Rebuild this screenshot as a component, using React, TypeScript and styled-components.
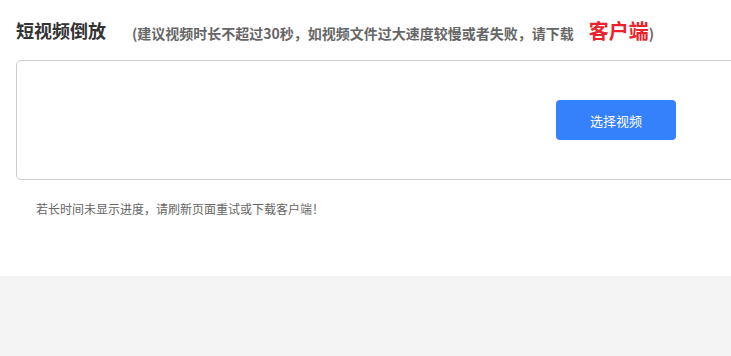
import styled, { createGlobalStyle } from "styled-components";

const GlobalStyle = createGlobalStyle`
    html, body {
        margin: 0;
        padding: 0;
        background: #f4f4f4;
        overflow: hidden;
        font-family: "Noto Sans CJK SC", "Noto Sans", sans-serif;
    }
`;

const PageDiv = styled.div`
    background: #ffffff;
    height: 276px;
    padding: 0 0 0 16px;
    box-sizing: border-box;
`;

const HeaderDiv = styled.div`
    display: flex;
    align-items: center;
    height: 60px;
    white-space: nowrap;
`;

const TitleH = styled.h1`
    margin: 0;
    font-size: 18px;
    font-weight: 700;
    color: #333333;
`;

const TipSpan = styled.span`
    margin-left: 26px;
    font-size: 14px;
    font-weight: 700;
    color: #666666;
`;

const ClientA = styled.a`
    margin-left: 15px;
    font-size: 20px;
    font-weight: 700;
    color: #e8232b;
    text-decoration: none;
`;

const UploadBox = styled.div`
    width: 1200px;
    height: 120px;
    box-sizing: border-box;
    border: 1px solid #cccccc;
    border-radius: 5px;
    display: flex;
    align-items: center;
    justify-content: center;
`;

const PickButton = styled.button`
    width: 120px;
    height: 40px;
    border: none;
    border-radius: 4px;
    background: #3581fb;
    color: #ffffff;
    font-family: "Noto Sans CJK SC", sans-serif;
    font-size: 13px;
    cursor: pointer;
`;

const NoteP = styled.p`
    margin: 20px 0 0 20px;
    font-size: 12px;
    color: #666666;
`;

export default function App() {
    return (
        <>
            <GlobalStyle />
            <PageDiv>
                <HeaderDiv>
                    <TitleH>短视频倒放</TitleH>
                    <TipSpan>
                        (建议视频时长不超过30秒，如视频文件过大速度较慢或者失败，请下载
                        <ClientA href="#">客户端</ClientA>)
                    </TipSpan>
                </HeaderDiv>
                <UploadBox>
                    <PickButton>选择视频</PickButton>
                </UploadBox>
                <NoteP>若长时间未显示进度，请刷新页面重试或下载客户端！</NoteP>
            </PageDiv>
        </>
    );
}
